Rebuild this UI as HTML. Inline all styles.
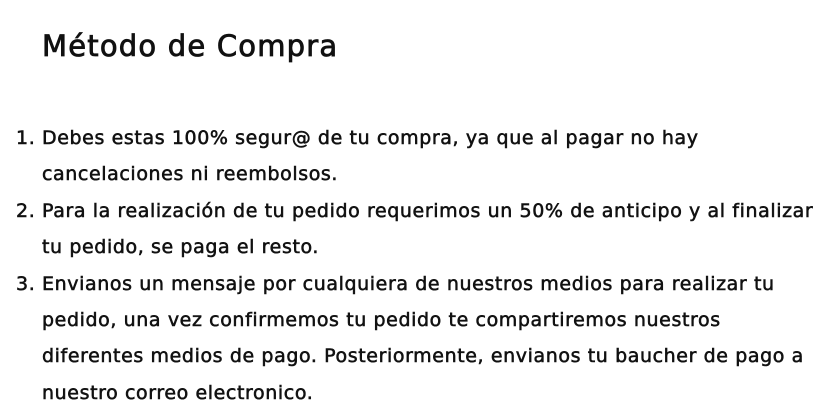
<!DOCTYPE html>
<html><head><meta charset="utf-8"><style>
html,body{margin:0;padding:0;background:#fff;width:834px;height:406px;overflow:hidden}
body{font-family:"DejaVu Sans","Liberation Sans",sans-serif;color:#111}
h1{position:absolute;left:42px;top:28px;margin:0;font-size:29px;line-height:36px;letter-spacing:1.2px;font-weight:normal;-webkit-text-stroke:0.8px #111;white-space:nowrap}
ol{position:absolute;left:0;top:120px;margin:0;padding:0 0 0 42px;font-size:19px;line-height:36.4px;letter-spacing:0.6px;-webkit-text-stroke:0.55px #111;white-space:nowrap}
</style></head><body>
<h1>Método de Compra</h1>
<ol>
<li>Debes estas 100% segur@ de tu compra, ya que al pagar no hay<br>cancelaciones ni reembolsos.</li>
<li>Para la realización de tu pedido requerimos un 50% de anticipo y al finalizar<br>tu pedido, se paga el resto.</li>
<li>Envianos un mensaje por cualquiera de nuestros medios para realizar tu<br>pedido, una vez confirmemos tu pedido te compartiremos nuestros<br>diferentes medios de pago. Posteriormente, envianos tu baucher de pago a<br>nuestro correo electronico.</li>
</ol>
</body></html>
